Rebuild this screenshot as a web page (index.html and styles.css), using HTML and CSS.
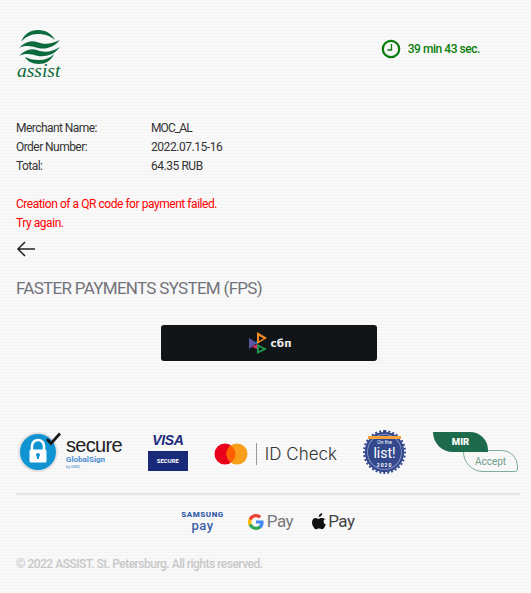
FILE: index.html
```html
<!DOCTYPE html>
<html lang="en">
<head>
  <meta charset="UTF-8">
  <meta name="viewport" content="width=device-width, initial-scale=1.0">
  <title>ASSIST - Faster Payments System</title>
  <link rel="stylesheet" href="styles.css">
</head>
<body>
  <div class="container">
    <header class="top">
      <div class="logo">
        <svg width="46" height="34" viewBox="0 0 46 34">
          <path d="M5 12C8 4 14 0 22 0c8 0 14 4 17 10-5-4-10-6-17-6-7 0-13 3-17 8z" fill="#0c6b3c"/>
          <path d="M3 18c6-6 11-8 18-6 7 3 15 2 23-2-6 7-14 10-22 8-7-2-13-3-19 0z" fill="#0c6b3c"/>
          <path d="M3 26c6-6 11-8 18-6 7 3 15 2 23-3-6 8-14 10-22 9-7-2-13-3-19 0z" fill="#0c6b3c"/>
          <path d="M9 27c4 2 8 3 14 3 6 0 11-2 15-6-3 7-9 10-15 10-7 0-12-3-14-7z" fill="#0c6b3c"/>
        </svg>
        <span class="logo-text">assist</span>
      </div>
      <div class="timer">
        <svg width="20" height="20" viewBox="0 0 20 20">
          <circle cx="10" cy="10" r="8.2" fill="none" stroke="#0a7d0a" stroke-width="2.2"/>
          <path d="M10.500 5v6H6.500" fill="none" stroke="#0a7d0a" stroke-width="1.300"/>
        </svg>
        <span>39 min 43 sec.</span>
      </div>
    </header>

    <section class="info">
      <div class="info-row"><span class="info-label">Merchant Name:</span><span class="info-code">MOC_AL</span></div>
      <div class="info-row"><span class="info-label">Order Number:</span><span>2022.07.15-16</span></div>
      <div class="info-row"><span class="info-label">Total:</span><span>64.35 RUB</span></div>
    </section>

    <p class="error">Creation of a QR code for payment failed.<br>Try again.</p>

    <a class="back" href="#">
      <svg width="20" height="16" viewBox="0 0 20 16">
        <path d="M19 8H2M9 1L2 8l7 7" fill="none" stroke="#222" stroke-width="1.500"/>
      </svg>
    </a>

    <h1 class="title">FASTER PAYMENTS SYSTEM (FPS)</h1>

    <div class="pay-wrap">
      <button class="sbp-btn" type="button">
        <svg width="18" height="22" viewBox="0 0 18 22">
          <path d="M0 6l8 5-8 6z" fill="#5b57a2"/>
          <path d="M8 0l10 6-10 6z" fill="#f6881f"/>
          <path d="M10 4l4.500 2.500L10 9z" fill="#121518"/>
          <path d="M8 12l10 5-10 5z" fill="#1c9a4b"/>
          <path d="M10 15l4 2-4 2z" fill="#121518"/>
          <path d="M3 15l5-3v5z" fill="#d92b68"/>
          <path d="M5 11l3-2v3z" fill="#0f79c0"/>
        </svg>
        <span>сбп</span>
      </button>
    </div>

    <footer class="footer">
      <div class="badges">
        <div class="gs">
          <svg width="44" height="40" viewBox="0 0 44 40">
            <circle cx="20" cy="20" r="20" fill="#e2e2e2"/>
            <circle cx="20" cy="20" r="18" fill="#0f93d2"/>
            <path d="M14 18v-4a6 6 0 0 1 12 0v4" fill="none" stroke="#fff" stroke-width="2.600"/>
            <rect x="11.500" y="17.500" width="17" height="13" rx="1.500" fill="#fff"/>
            <circle cx="20" cy="23" r="2" fill="#0f93d2"/>
            <rect x="19" y="23" width="2" height="4" fill="#0f93d2"/>
            <path d="M29 7l4 4.500L42 1.500" fill="none" stroke="#1a1a1a" stroke-width="2.800"/>
          </svg>
          <div class="gs-text">
            <span class="gs-secure">secure</span>
            <span class="gs-name">GlobalSign</span>
            <span class="gs-gmo">by GMO</span>
          </div>
        </div>
        <div class="visa">
          <span class="visa-name">VISA</span>
          <span class="visa-secure">SECURE</span>
        </div>
        <div class="idcheck">
          <svg width="34" height="22" viewBox="0 0 34 22">
            <circle cx="11" cy="11" r="10.500" fill="#eb001b"/>
            <circle cx="23" cy="11" r="10.500" fill="#f79e1b"/>
            <path d="M17 2.400a10.500 10.500 0 0 1 0 17.200a10.500 10.500 0 0 1 0-17.200z" fill="#ff5f00"/>
          </svg>
          <span class="idcheck-text">ID Check</span>
        </div>
        <div class="list">
          <span class="list-band"></span>
          <span class="list-small">On the</span>
          <span class="list-big">list!</span>
          <span class="list-year">2020</span>
        </div>
        <div class="mir">
          <span class="mir-accept">Accept</span>
          <span class="mir-top">MIR</span>
        </div>
      </div>
      <div class="wallets">
        <div class="samsung"><span>SAMSUNG</span><span class="samsung-pay">pay</span></div>
        <div class="gpay">
          <svg width="16" height="16" viewBox="0 0 16 16">
            <path d="M15.600 8.200c0-.6-.1-1.100-.2-1.600H8v3h4.300c-.2 1-.7 1.800-1.600 2.400v2h2.600c1.500-1.400 2.300-3.400 2.300-5.800z" fill="#4285f4"/>
            <path d="M8 16c2.200 0 4-.7 5.300-2l-2.600-2c-.7.500-1.600.8-2.700.8-2.100 0-3.900-1.400-4.500-3.300H.8v2.100C2.100 14.200 4.800 16 8 16z" fill="#34a853"/>
            <path d="M3.500 9.500a4.800 4.800 0 0 1 0-3V4.400H.8a8 8 0 0 0 0 7.200z" fill="#fbbc04"/>
            <path d="M8 3.200c1.200 0 2.200.4 3 1.200l2.300-2.300C11.900.8 10.100 0 8 0 4.800 0 2.100 1.800.8 4.400l2.700 2.100C4.100 4.600 5.900 3.200 8 3.200z" fill="#ea4335"/>
          </svg>
          <span>Pay</span>
        </div>
        <div class="apay">
          <svg width="14" height="17" viewBox="0 0 14 17">
            <path d="M10.200 0c.1 1-.3 2-.9 2.700-.6.700-1.500 1.300-2.500 1.200-.1-1 .4-2 1-2.600C8.400.6 9.400.1 10.200 0zM13.300 5.700c-1 .6-1.700 1.600-1.700 2.800 0 1.500.9 2.600 2.200 3.100-.3.900-.7 1.800-1.300 2.700-.7 1-1.500 2-2.600 2-1.100 0-1.500-.7-2.800-.7-1.300 0-1.700.7-2.800.7-1.100 0-1.900-1.100-2.700-2.100C.5 12.700 0 10.900 0 9.200c0-2.700 1.800-4.200 3.500-4.200 1.100 0 2.100.8 2.800.8.700 0 1.800-.8 3.100-.8 1.500 0 3 .3 3.900 1.700z" fill="#111"/>
          </svg>
          <span>Pay</span>
        </div>
      </div>
      <p class="copyright">© 2022 ASSIST. St. Petersburg. All rights reserved.</p>
    </footer>
  </div>
</body>
</html>
```

FILE: styles.css
```css
html, body {
  height: 100%;
}
body {
  margin: 0;
  padding: 0;
  font-family: Roboto, Arial, sans-serif;
  font-size: 12px;
  letter-spacing: -0.45px;
  color: #333;
  background-color: #f7f7f7;
  background-image: repeating-linear-gradient(to bottom, #f4f4f4 0, #f4f4f4 1px, #f9f9f9 1px, #f9f9f9 3px);
  overflow: hidden;
}
.container {
  display: flex;
  flex-direction: column;
  padding: 30px 11px 0 16px;
}
.top {
  display: flex;
  justify-content: space-between;
  align-items: flex-start;
  height: 48px;
  padding-right: 40px;
}
.logo {
  display: flex;
  flex-direction: column;
  width: 46px;
}
.logo svg {
  display: block;
}
.logo-text {
  margin-left: 1px;
  font-family: "Liberation Serif", serif;
  font-style: italic;
  font-size: 19.5px;
  line-height: 14px;
  letter-spacing: 0;
  color: #0c6b3c;
}
.timer {
  display: flex;
  align-items: center;
  gap: 7px;
  margin-top: 9px;
  color: #0a7d0a;
  font-weight: 500;
}
.info {
  margin-top: 41px;
}
.info-row {
  display: flex;
  line-height: 19px;
}
.info-label {
  width: 135px;
  letter-spacing: -0.55px;
}
.info-code {
  letter-spacing: -0.9px;
}
.error {
  margin: 19px 0 0;
  color: #f00;
  line-height: 19px;
}
.back {
  display: block;
  height: 16px;
  margin-top: 8px;
}
.back svg {
  display: block;
}
.title {
  margin: 21px 0 0;
  font-size: 17px;
  line-height: 20px;
  font-weight: 400;
  letter-spacing: -0.7px;
  color: #72727a;
}
.pay-wrap {
  display: flex;
  justify-content: center;
  margin-top: 27px;
  padding-left: 2px;
}
.sbp-btn {
  display: flex;
  align-items: center;
  justify-content: center;
  gap: 4px;
  width: 216px;
  height: 36px;
  border: none;
  border-radius: 3px;
  padding: 0 0 0 2px;
  background-color: #121518;
  color: #eee;
  font-family: "DejaVu Sans", sans-serif;
  font-size: 10.5px;
  font-weight: 700;
  letter-spacing: 0;
  cursor: pointer;
}
.footer {
  margin-top: 69px;
}
.badges {
  display: flex;
  align-items: center;
  height: 44px;
  padding-bottom: 19px;
  border-bottom: 2px solid #e6e6e6;
  letter-spacing: 0;
}
.gs {
  display: flex;
  align-items: center;
  gap: 4px;
  margin-left: 2px;
}
.gs-text {
  display: flex;
  flex-direction: column;
}
.gs-secure {
  font-family: "Liberation Sans", sans-serif;
  font-size: 20px;
  line-height: 20px;
  color: #222;
  letter-spacing: -0.7px;
}
.gs-name {
  font-size: 8px;
  line-height: 9px;
  font-weight: 700;
  color: #4a8fd0;
}
.gs-gmo {
  font-size: 4px;
  line-height: 5px;
  color: #3d86c6;
}
.visa {
  display: flex;
  flex-direction: column;
  align-items: center;
  margin-left: 26px;
}
.visa-name {
  font-family: "Liberation Sans", sans-serif;
  font-size: 14px;
  line-height: 15px;
  font-weight: 700;
  font-style: italic;
  letter-spacing: -0.4px;
  color: #1a2a7a;
}
.visa-secure {
  width: 40px;
  height: 20px;
  margin-top: 3px;
  background-color: #1a2a7a;
  color: #fff;
  font-size: 6px;
  font-weight: 700;
  line-height: 20px;
  text-align: center;
}
.idcheck {
  display: flex;
  align-items: center;
  margin-top: 4px;
  margin-left: 26px;
}
.idcheck-text {
  margin-left: 8px;
  padding-left: 8px;
  border-left: 1px solid #999;
  font-family: "Inter", sans-serif;
  font-size: 17px;
  font-weight: 300;
  line-height: 22px;
  white-space: nowrap;
  color: #333;
}
.list {
  display: flex;
  flex-direction: column;
  align-items: center;
  flex: none;
  width: 43px;
  height: 44px;
  margin-left: 26px;
  padding-top: 4px;
  box-sizing: border-box;
  border: 2px dotted #33488c;
  border-radius: 50%;
  background-color: #33488c;
  background-clip: padding-box;
  box-shadow: inset 0 0 0 2px #33488c, inset 0 0 0 3px #8090bc;
  color: #fff;
}
.list-band {
  flex: none;
  width: 33px;
  height: 3px;
  background-color: #f5a13c;
}
.list-small {
  font-size: 5px;
  line-height: 6px;
}
.list-big {
  font-size: 14px;
  line-height: 17px;
}
.list-year {
  font-size: 5px;
  line-height: 6px;
  font-weight: 700;
  letter-spacing: 1px;
}
.mir {
  position: relative;
  flex: none;
  width: 85px;
  height: 40px;
  margin-left: 27px;
}
.mir-top {
  position: absolute;
  left: 0;
  top: 0;
  width: 55px;
  height: 20px;
  border-radius: 0 18px 0 20px;
  background-color: #1d6a4c;
  color: #fff;
  font-size: 9.5px;
  font-weight: 900;
  line-height: 20px;
  text-align: center;
}
.mir-accept {
  position: absolute;
  left: 30px;
  top: 18px;
  width: 55px;
  height: 22px;
  box-sizing: border-box;
  padding-top: 2px;
  border: 1px solid #7fae9c;
  border-radius: 0 16px 3px 20px;
  color: #6f9c8b;
  font-size: 10px;
  line-height: 18px;
  text-align: center;
}
.wallets {
  display: flex;
  align-items: center;
  justify-content: center;
  margin-top: 16px;
}
.samsung {
  display: flex;
  flex-direction: column;
  align-items: center;
  font-size: 8px;
  line-height: 8px;
  font-weight: 900;
  letter-spacing: 0.5px;
  color: #3a5fa8;
}
.samsung-pay {
  font-size: 13px;
  line-height: 13px;
  font-weight: 500;
}
.gpay, .apay {
  display: flex;
  align-items: center;
  gap: 3px;
  font-size: 17px;
  line-height: 21px;
  color: #777;
}
.gpay {
  margin-left: 24px;
}
.apay {
  gap: 2px;
  margin-left: 19px;
  color: #444;
}
.copyright {
  margin: 25px 0 0;
  color: #c8c8c8;
  line-height: 14px;
  font-weight: 500;
  letter-spacing: -0.5px;
}
```
